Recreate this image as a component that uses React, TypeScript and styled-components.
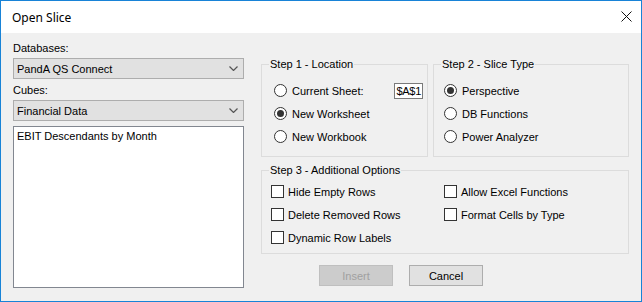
import styled, { createGlobalStyle, css } from 'styled-components';

const GlobalStyle = createGlobalStyle`
  html, body {
    margin: 0;
    padding: 0;
    background: #f0f0f0;
  }
  body {
    font-family: "Liberation Sans", Arial, sans-serif;
    font-size: 11px;
    color: #000;
  }
`;

const Window = styled.div`
  width: 642px;
  height: 302px;
  box-sizing: border-box;
  border: 1px solid #1883d7;
  background: #f0f0f0;
  display: flex;
  flex-direction: column;
`;

const TitleBar = styled.div`
  height: 32px;
  flex: none;
  background: #fff;
  display: flex;
  align-items: center;
  justify-content: space-between;
  padding: 0 9px 0 11px;
  font-family: "Noto Sans", "Open Sans", sans-serif;
  font-size: 12px;
`;

const CloseButton = styled.div`
  width: 11px;
  height: 11px;
  display: flex;
  margin-top: -1px;
`;

const Body = styled.div`
  display: flex;
  flex-direction: row;
  align-items: flex-start;
  padding: 9px 0 0 12px;
`;

const LeftColumn = styled.div`
  width: 231px;
  display: flex;
  flex-direction: column;
`;

const FieldLabel = styled.div`
  line-height: 13px;
  margin-bottom: 3px;
`;

const Combo = styled.div`
  height: 21px;
  box-sizing: border-box;
  border: 1px solid #adadad;
  background: #e1e1e1;
  display: flex;
  align-items: center;
  justify-content: space-between;
  padding: 0 5px 0 3px;
  margin-bottom: 5px;
`;

const ListBox = styled.div`
  height: 162px;
  box-sizing: border-box;
  border: 1px solid #828790;
  background: #fff;
  padding: 3px 3px;
  line-height: 13px;
`;

const RightColumn = styled.div`
  width: 368px;
  margin-left: 17px;
  padding-top: 16px;
  display: flex;
  flex-direction: column;
`;

const TopGroups = styled.div`
  display: flex;
  flex-direction: row;
  gap: 5px;
`;

const Group = styled.fieldset<{ width: number }>`
  width: ${({ width }) => width}px;
  box-sizing: border-box;
  min-width: 0;
  margin: 0;
  padding: 0;
  border: 1px solid #dcdcdc;
`;

const Caption = styled.legend`
  margin-left: 7px;
  padding: 0 1px;
  line-height: 13px;
`;

const GroupContent = styled.div<{ pad: string }>`
  padding: ${({ pad }) => pad};
  display: flex;
  flex-direction: column;
`;

const OptionRow = styled.div`
  height: 23px;
  display: flex;
  align-items: center;
  justify-content: space-between;
`;

const Option = styled.label<{ gap?: number }>`
  display: flex;
  align-items: center;
  gap: ${({ gap = 5 }) => gap}px;
  white-space: nowrap;
`;

const RadioCircle = styled.span<{ checked?: boolean }>`
  width: 13px;
  height: 13px;
  box-sizing: border-box;
  border: 1px solid #333;
  border-radius: 50%;
  background: #fff;
  display: flex;
  align-items: center;
  justify-content: center;
  ${({ checked }) => checked && css`
    &::after {
      content: '';
      width: 7px;
      height: 7px;
      border-radius: 50%;
      background: #333;
    }
  `}
`;

const CellBox = styled.div`
  width: 29px;
  height: 16px;
  box-sizing: border-box;
  border: 1px solid #7a7a7a;
  background: #fff;
  margin-right: 4px;
  display: flex;
  align-items: center;
  justify-content: flex-end;
  padding-right: 1px;
  letter-spacing: -0.3px;
`;

const OptionsGrid = styled.div`
  display: grid;
  grid-template-columns: 173px 1fr;
`;

const CheckBox = styled.span`
  width: 13px;
  height: 13px;
  box-sizing: border-box;
  border: 1px solid #333;
  background: #fff;
`;

const ButtonRow = styled.div`
  display: flex;
  gap: 16px;
  margin-top: 11px;
  padding-left: 58px;
`;

const Button = styled.div<{ disabled?: boolean }>`
  width: 74px;
  height: 21px;
  box-sizing: border-box;
  border: 1px solid #adadad;
  background: #e1e1e1;
  display: flex;
  align-items: center;
  justify-content: center;
  ${({ disabled }) => disabled && css`
    border-color: #bfbfbf;
    background: #cccccc;
    color: #a0a0a0;
  `}
`;

const Chevron = () => (
  <svg width="9" height="5" viewBox="0 0 9 5">
    <path d="M0.5 0.5 L4.5 4.5 L8.5 0.5" fill="none" stroke="#555" strokeWidth="1.2" />
  </svg>
);

const Radio = ({ label, checked }: { label: string; checked?: boolean }) => (
  <Option>
    <RadioCircle checked={checked} />
    {label}
  </Option>
);

const Check = ({ label }: { label: string }) => (
  <OptionRow>
    <Option gap={4}>
      <CheckBox />
      {label}
    </Option>
  </OptionRow>
);

export default function App() {
  return (
    <>
      <GlobalStyle />
      <Window>
        <TitleBar>
          <span>Open Slice</span>
          <CloseButton>
            <svg width="11" height="11" viewBox="0 0 11 11">
              <path d="M0.5 0.5 L10.5 10.5 M10.5 0.5 L0.5 10.5" stroke="#111" strokeWidth="1" />
            </svg>
          </CloseButton>
        </TitleBar>
        <Body>
          <LeftColumn>
            <FieldLabel>Databases:</FieldLabel>
            <Combo>
              <span>PandA QS Connect</span>
              <Chevron />
            </Combo>
            <FieldLabel>Cubes:</FieldLabel>
            <Combo>
              <span>Financial Data</span>
              <Chevron />
            </Combo>
            <ListBox>EBIT Descendants by Month</ListBox>
          </LeftColumn>
          <RightColumn>
            <TopGroups>
              <Group width={167}>
                <Caption>Step 1 - Location</Caption>
                <GroupContent pad="8px 0 8px 12px">
                  <OptionRow>
                    <Radio label="Current Sheet:" />
                    <CellBox>$A$1</CellBox>
                  </OptionRow>
                  <OptionRow>
                    <Radio label="New Worksheet" checked />
                  </OptionRow>
                  <OptionRow>
                    <Radio label="New Workbook" />
                  </OptionRow>
                </GroupContent>
              </Group>
              <Group width={196}>
                <Caption>Step 2 - Slice Type</Caption>
                <GroupContent pad="8px 0 8px 10px">
                  <OptionRow>
                    <Radio label="Perspective" checked />
                  </OptionRow>
                  <OptionRow>
                    <Radio label="DB Functions" />
                  </OptionRow>
                  <OptionRow>
                    <Radio label="Power Analyzer" />
                  </OptionRow>
                </GroupContent>
              </Group>
            </TopGroups>
            <Group width={368} style={{ marginTop: 7 }}>
              <Caption>Step 3 - Additional Options</Caption>
              <GroupContent pad="3px 0 4px 9px">
                <OptionsGrid>
                  <Check label="Hide Empty Rows" />
                  <Check label="Allow Excel Functions" />
                  <Check label="Delete Removed Rows" />
                  <Check label="Format Cells by Type" />
                  <Check label="Dynamic Row Labels" />
                </OptionsGrid>
              </GroupContent>
            </Group>
            <ButtonRow>
              <Button disabled>Insert</Button>
              <Button>Cancel</Button>
            </ButtonRow>
          </RightColumn>
        </Body>
      </Window>
    </>
  );
}
